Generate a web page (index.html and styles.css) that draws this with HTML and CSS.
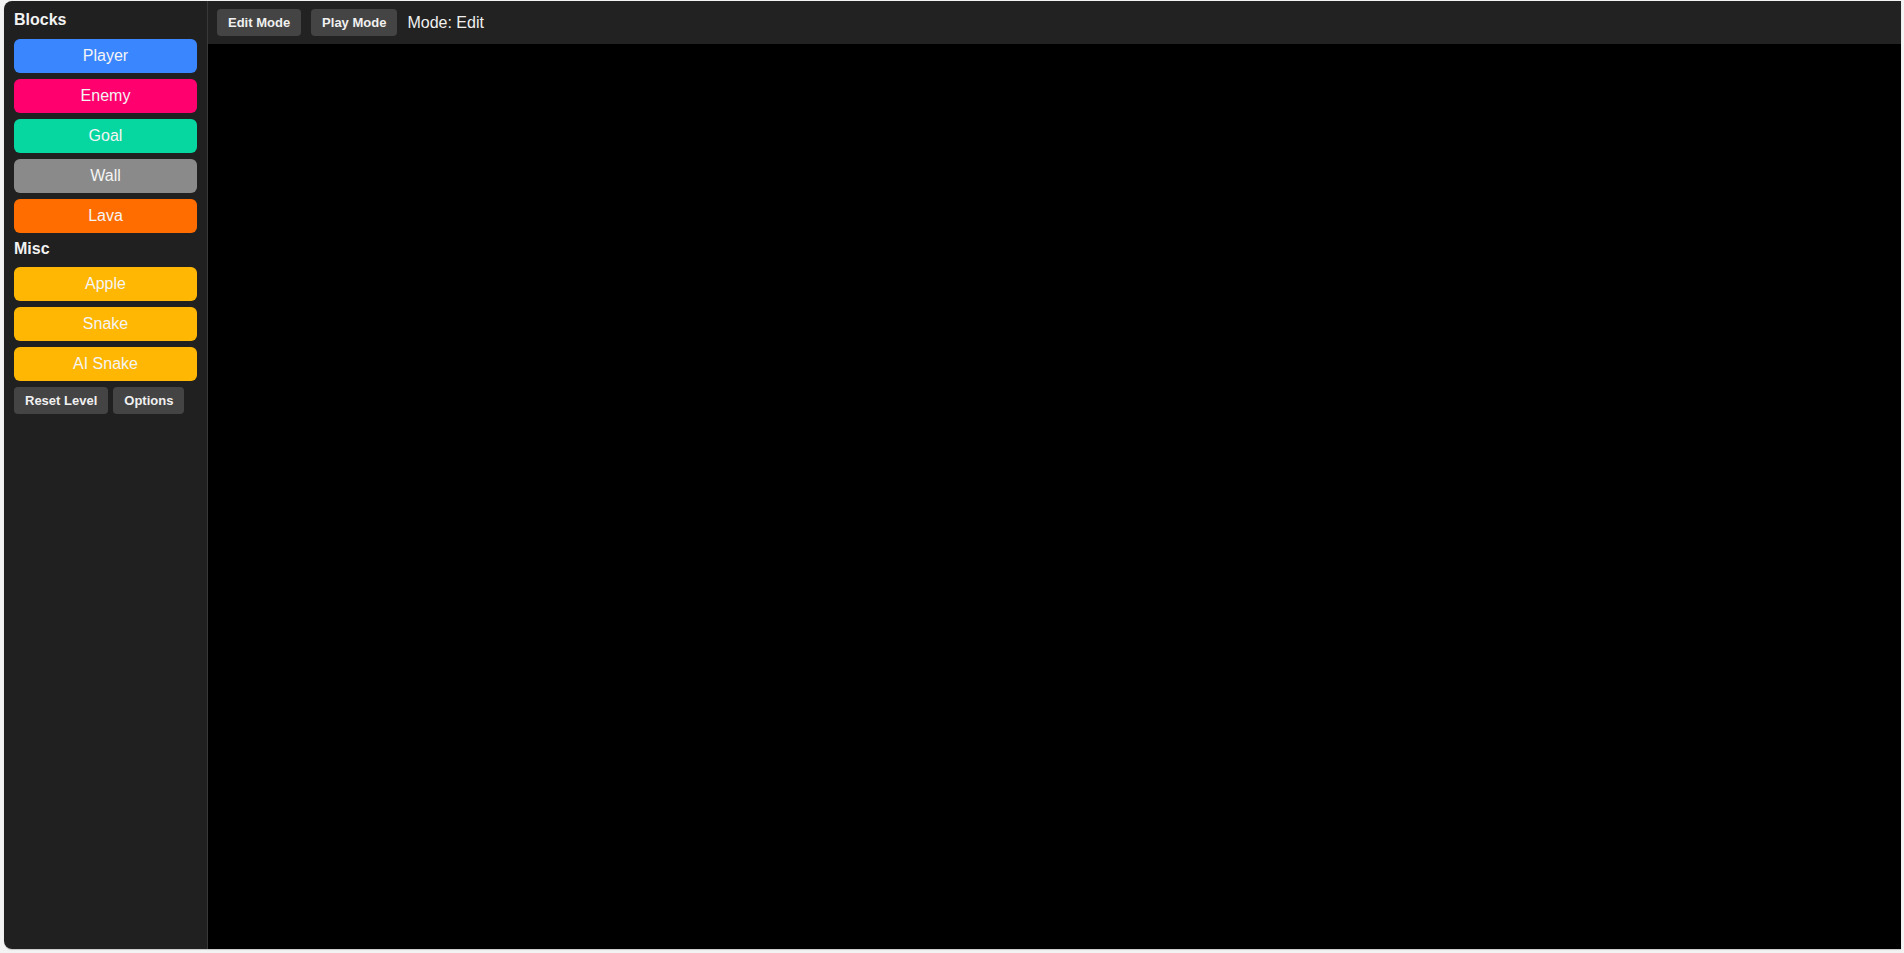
FILE: index.html
```html
<!DOCTYPE html>
<html lang="en">
<head>
<meta charset="utf-8">
<title>Level Editor</title>
<link rel="stylesheet" href="styles.css">
</head>
<body>
<div class="app">
  <aside class="sidebar">
    <h3 class="group-title">Blocks</h3>
    <div class="palette">
      <button class="block block-player">Player</button>
      <button class="block block-enemy">Enemy</button>
      <button class="block block-goal">Goal</button>
      <button class="block block-wall">Wall</button>
      <button class="block block-lava">Lava</button>
    </div>
    <h3 class="group-title group-misc">Misc</h3>
    <div class="palette">
      <button class="block block-misc">Apple</button>
      <button class="block block-misc">Snake</button>
      <button class="block block-misc">AI Snake</button>
    </div>
    <div class="actions">
      <button class="tool-btn tool-reset">Reset Level</button>
      <button class="tool-btn">Options</button>
    </div>
  </aside>
  <main class="main">
    <div class="toolbar">
      <button class="tool-btn">Edit Mode</button>
      <button class="tool-btn">Play Mode</button>
      <span class="mode-label">Mode: Edit</span>
    </div>
    <div class="stage"></div>
  </main>
</div>
</body>
</html>
```

FILE: styles.css
```css
* {
  box-sizing: border-box;
}

html, body {
  height: 100%;
}

body {
  margin: 0;
  background: #f3f3f3;
  font-family: "Liberation Sans", Arial, sans-serif;
  color: #f0f0f0;
}

.app {
  display: flex;
  margin: 1px 3px 0 4px;
  height: 948px;
  box-shadow: 0 1px 1px rgba(0, 0, 0, 0.18);
  border-radius: 8px 0 0 8px;
}

.sidebar {
  width: 204px;
  flex: none;
  background: #202020;
  border-right: 1px solid #383838;
  border-radius: 8px 0 0 8px;
  padding: 9px 9px 0 10px;
  display: flex;
  flex-direction: column;
}

.group-title {
  margin: 0 0 10px;
  font-size: 16px;
  line-height: 19px;
  font-weight: bold;
  color: #f2f2f2;
}

.group-misc {
  margin-top: 6px;
  margin-bottom: 9px;
}

.palette {
  display: flex;
  flex-direction: column;
  gap: 6px;
}

.block {
  height: 34px;
  width: 183px;
  border: none;
  border-radius: 6px;
  font-family: "Liberation Sans", Arial, sans-serif;
  font-size: 16px;
  color: #f4f4f4;
  padding: 0;
  cursor: pointer;
}

.block-player { background: #3a86ff; }
.block-enemy  { background: #ff006e; }
.block-goal   { background: #06d6a0; }
.block-wall   { background: #8a8a8a; }
.block-lava   { background: #ff6d00; }
.block-misc   { background: #ffb703; }

.actions {
  display: flex;
  gap: 5px;
  margin-top: 6px;
}

.tool-btn {
  height: 27px;
  padding: 0 11px;
  border: none;
  border-radius: 4px;
  background: #444444;
  color: #f0f0f0;
  font-family: "Liberation Sans", Arial, sans-serif;
  font-size: 13px;
  font-weight: bold;
  cursor: pointer;
}

.main {
  flex: 1;
  display: flex;
  flex-direction: column;
  background: #000;
  min-width: 0;
}

.toolbar {
  height: 43px;
  flex: none;
  background: #222222;
  display: flex;
  align-items: center;
  gap: 10px;
  padding: 0 9px;
}

.mode-label {
  font-size: 16px;
  color: #f0f0f0;
}

.stage {
  flex: 1;
  background: #000;
}
```
